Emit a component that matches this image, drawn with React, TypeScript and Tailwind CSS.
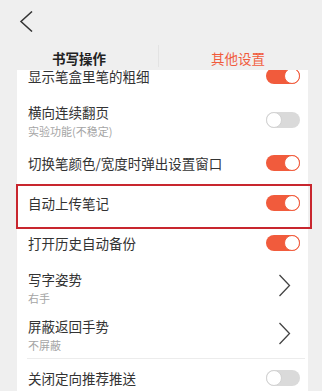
import React from "react";

const ORANGE = "#f15b3c";

function Toggle({ on }: { on: boolean }) {
  return on ? (
    <div className="relative w-[34px] h-[16px] rounded-full bg-[#f15b3c] shrink-0">
      <div className="absolute right-0 top-0 w-[16px] h-[16px] rounded-full bg-white border border-[#f15b3c]" />
    </div>
  ) : (
    <div className="relative w-[34px] h-[16px] rounded-full bg-[#dadada] shrink-0">
      <div className="absolute left-0 top-0 w-[16px] h-[16px] rounded-full bg-white border border-[#d2d2d2]" />
    </div>
  );
}

function Chevron() {
  return (
    <svg width="13" height="23" viewBox="0 0 13 23" className="shrink-0 mt-[-3px]">
      <path d="M1.5 1 L11.5 11.5 L1.5 22" fill="none" stroke="#444" strokeWidth="1.3" />
    </svg>
  );
}

function Row({
  title,
  sub,
  h,
  right,
  pr = "pr-[8px]",
}: {
  title: string;
  sub?: string;
  h: string;
  right: React.ReactNode;
  pr?: string;
}) {
  return (
    <div className={`flex items-center justify-between pl-[11px] ${pr} ${h}`}>
      <div className="flex flex-col">
        <span className="text-[13.5px] leading-[20px] text-[#333]">{title}</span>
        {sub && <span className="text-[11px] leading-[16px] mt-[1px] text-[#a5a5a5]">{sub}</span>}
      </div>
      {right}
    </div>
  );
}

export default function App() {
  return (
    <div
      className="w-[322px] h-[391px] overflow-hidden bg-[#efefef]"
      style={{ fontFamily: '"Noto Sans CJK SC", "Noto Sans", sans-serif' }}
    >
      {/* Header */}
      <div className="h-[45px] pl-[19px] pt-[11px]">
        <svg width="15" height="21" viewBox="0 0 15 21">
          <path d="M13 0.5 L2 10.5 L13 20.5" fill="none" stroke="#333" strokeWidth="1.5" />
        </svg>
      </div>

      {/* Tabs */}
      <div className="w-[317px] h-[25px] flex">
        <div className="flex-1 flex justify-center pt-[3px] text-[13.5px] leading-[20px] font-semibold text-[#222]">
          书写操作
        </div>
        <div className="w-px h-[22px] bg-[#e3e3e3]" />
        <div className="flex-1 flex justify-center pt-[3px] text-[13.5px] leading-[20px]" style={{ color: ORANGE }}>
          其他设置
        </div>
      </div>

      {/* Card */}
      <div className="relative ml-[17px] w-[291px] bg-white">
        <div className="h-[27px] overflow-hidden">
          <div className="mt-[-14px]">
            <Row title="显示笔盒里笔的粗细" h="h-[40px]" right={<Toggle on />} />
          </div>
        </div>
        <Row title="横向连续翻页" sub="实验功能(不稳定)" h="h-[46px]" right={<Toggle on={false} />} />
        <Row title="切换笔颜色/宽度时弹出设置窗口" h="h-[40px]" right={<Toggle on />} />
        <Row title="自动上传笔记" h="h-[40px]" right={<Toggle on />} />
        <Row title="打开历史自动备份" h="h-[40px]" right={<Toggle on />} />
        <Row title="写字姿势" sub="右手" h="h-[48px]" pr="pr-[17px]" right={<Chevron />} />
        <Row title="屏蔽返回手势" sub="不屏蔽" h="h-[47px]" pr="pr-[17px]" right={<Chevron />} />
        <div className="ml-[10px] mr-[3px] h-px bg-[#ececec]" />
        <Row title="关闭定向推荐推送" h="h-[38px]" right={<Toggle on={false} />} />

        {/* highlight annotation */}
        <div className="absolute left-[-1px] right-[-4px] top-[114px] h-[45px] border-2 border-[#c8262e]" />
      </div>
    </div>
  );
}
